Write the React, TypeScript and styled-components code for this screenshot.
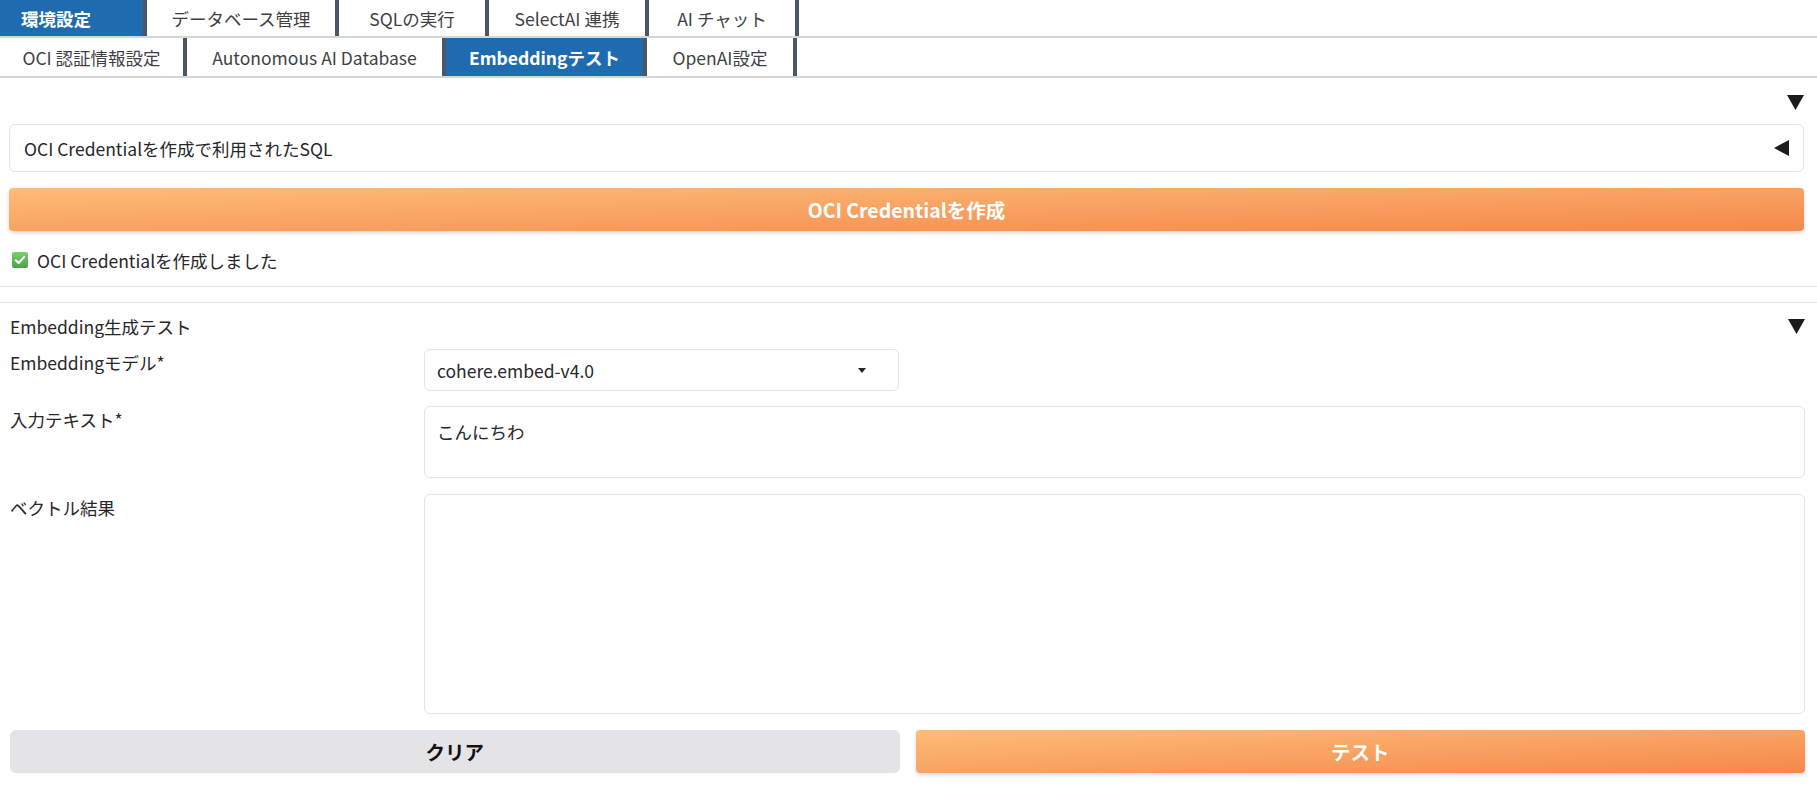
import React from "react";
import styled, { createGlobalStyle } from "styled-components";

const Global = createGlobalStyle`
  html, body { margin: 0; padding: 0; background: #ffffff; }
  body {
    font-family: "Noto Sans CJK JP", "Noto Sans", sans-serif;
    color: #27272a;
    font-size: 17.5px;
  }
  * { box-sizing: border-box; }
`;

const Page = styled.div`
  width: 1817px;
  min-height: 797px;
  display: flex;
  flex-direction: column;
`;

const TabBar = styled.div<{ $h: number }>`
  display: flex;
  height: ${(p) => p.$h}px;
  border-bottom: 2px solid #d6d6d6;
`;

const Tab = styled.div<{ $active?: boolean; $w: number; $left?: boolean }>`
  width: ${(p) => p.$w}px;
  flex: 0 0 auto;
  display: flex;
  align-items: center;
  justify-content: ${(p) => (p.$left ? "flex-start" : "center")};
  padding-left: ${(p) => (p.$left ? "21px" : "0")};
  font-size: 17.5px;
  font-weight: ${(p) => (p.$active ? 700 : 400)};
  color: ${(p) => (p.$active ? "#ffffff" : "#3f3f46")};
  background: ${(p) => (p.$active ? "#1f6bb0" : "#ffffff")};
  border-right: 4px solid #4a5866;
  white-space: nowrap;
`;

const Top = styled.div`
  display: flex;
  flex-direction: column;
  padding: 12px 13px 14px 9px;
`;

const ToggleRow = styled.div`
  height: 24px;
  display: flex;
  align-items: center;
  justify-content: flex-end;
  margin-bottom: 10px;
`;

const Accordion = styled.div`
  height: 48px;
  border: 1px solid #e4e4e7;
  border-radius: 6px;
  display: flex;
  align-items: center;
  justify-content: space-between;
  padding: 0 14px 0 14px;
  font-size: 17.5px;
  color: #27272a;
  margin-bottom: 16px;
`;

const OrangeButton = styled.button`
  height: 43px;
  border: none;
  border-radius: 4px;
  background: linear-gradient(to bottom right, #fdbd77, #f4884c);
  box-shadow: 0 2px 4px rgba(0, 0, 0, 0.16);
  color: #ffffff;
  font-family: inherit;
  font-size: 19.5px;
  font-weight: 700;
  display: flex;
  align-items: center;
  justify-content: center;
  width: 100%;
`;

const GrayButton = styled.button`
  height: 43px;
  border: none;
  border-radius: 6px;
  background: #e4e4e7;
  color: #111111;
  font-family: inherit;
  font-size: 19.5px;
  font-weight: 700;
  width: 100%;
`;

const Status = styled.div`
  margin-top: 17px;
  height: 24px;
  display: flex;
  align-items: center;
  gap: 9px;
  padding-left: 3px;
  font-size: 17.5px;
  color: #27272a;
`;

const Divider = styled.hr`
  border: none;
  height: 1px;
  background: #e4e4e7;
  margin: 0;
  width: 100%;
`;

const Gap = styled.div<{ $h: number }>`
  height: ${(p) => p.$h}px;
`;

const Section = styled.div`
  padding: 11px 12px 0 10px;
  display: flex;
  flex-direction: column;
`;

const SectionHeader = styled.div`
  height: 24px;
  display: flex;
  align-items: center;
  justify-content: space-between;
  font-size: 17.5px;
  margin-bottom: 11px;
`;

const FormRow = styled.div<{ $mb: number }>`
  display: grid;
  grid-template-columns: 414px 1fr;
  margin-bottom: ${(p) => p.$mb}px;
`;

const Label = styled.div`
  font-size: 17.5px;
  line-height: 24px;
  padding-top: 2px;
  color: #27272a;
`;

const Select = styled.div`
  width: 475px;
  height: 42px;
  border: 1px solid #e4e4e7;
  border-radius: 6px;
  display: flex;
  align-items: center;
  justify-content: space-between;
  padding: 0 32px 0 12px;
  font-size: 17.5px;
  color: #27272a;
`;

const Caret = styled.span`
  width: 0;
  height: 0;
  border-left: 4px solid transparent;
  border-right: 4px solid transparent;
  border-top: 5px solid #27272a;
`;

const TextBox = styled.div<{ $h: number }>`
  height: ${(p) => p.$h}px;
  border: 1px solid #e4e4e7;
  border-radius: 6px;
  padding: 13px 12px;
  font-size: 17.5px;
  line-height: 24px;
  color: #27272a;
`;

const ButtonRow = styled.div`
  display: grid;
  grid-template-columns: 1fr 1fr;
  gap: 16px;
`;

const Tri: React.FC<{ dir: "down" | "left" }> = ({ dir }) =>
  dir === "down" ? (
    <svg width="17" height="15" viewBox="0 0 17 15">
      <polygon points="0,0 17,0 8.5,15" fill="#1c1c1c" />
    </svg>
  ) : (
    <svg width="15" height="16" viewBox="0 0 15 16">
      <polygon points="15,0 15,16 0,8" fill="#1c1c1c" />
    </svg>
  );

const CheckIcon = () => (
  <svg width="16" height="16" viewBox="0 0 16 16">
    <defs>
      <linearGradient id="g" x1="0" y1="0" x2="0" y2="1">
        <stop offset="0" stopColor="#7ccf6a" />
        <stop offset="1" stopColor="#4aa548" />
      </linearGradient>
    </defs>
    <rect x="0" y="0" width="16" height="16" rx="2" fill="url(#g)" />
    <polyline points="3.8,8.3 6.6,11 12.2,4.9" fill="none" stroke="#ffffff" strokeWidth="2.1" strokeLinecap="round" strokeLinejoin="round" />
  </svg>
);

const row1 = [
  { t: "環境設定", w: 147, active: true, left: true },
  { t: "データベース管理", w: 192 },
  { t: "SQLの実行", w: 150 },
  { t: "SelectAI 連携", w: 160 },
  { t: "AI チャット", w: 150 },
];

const row2 = [
  { t: "OCI 認証情報設定", w: 187 },
  { t: "Autonomous AI Database", w: 259 },
  { t: "Embeddingテスト", w: 201, active: true },
  { t: "OpenAI設定", w: 150 },
];

export default function App() {
  return (
    <Page>
      <Global />
      <TabBar $h={38}>
        {row1.map((r) => (
          <Tab key={r.t} $w={r.w} $active={r.active} $left={r.left}>
            {r.t}
          </Tab>
        ))}
      </TabBar>
      <TabBar $h={40}>
        {row2.map((r) => (
          <Tab key={r.t} $w={r.w} $active={r.active}>
            {r.t}
          </Tab>
        ))}
      </TabBar>
      <Top>
        <ToggleRow>
          <Tri dir="down" />
        </ToggleRow>
        <Accordion>
          <span>OCI Credentialを作成で利用されたSQL</span>
          <Tri dir="left" />
        </Accordion>
        <OrangeButton>OCI Credentialを作成</OrangeButton>
        <Status>
          <CheckIcon />
          <span>OCI Credentialを作成しました</span>
        </Status>
      </Top>
      <Divider />
      <Gap $h={15} />
      <Divider />
      <Section>
        <SectionHeader>
          <span>Embedding生成テスト</span>
          <Tri dir="down" />
        </SectionHeader>
        <FormRow $mb={15}>
          <Label>Embeddingモデル*</Label>
          <Select>
            <span>cohere.embed-v4.0</span>
            <Caret />
          </Select>
        </FormRow>
        <FormRow $mb={16}>
          <Label>入力テキスト*</Label>
          <TextBox $h={72}>こんにちわ</TextBox>
        </FormRow>
        <FormRow $mb={16}>
          <Label>ベクトル結果</Label>
          <TextBox $h={220} />
        </FormRow>
        <ButtonRow>
          <GrayButton>クリア</GrayButton>
          <OrangeButton>テスト</OrangeButton>
        </ButtonRow>
      </Section>
    </Page>
  );
}
